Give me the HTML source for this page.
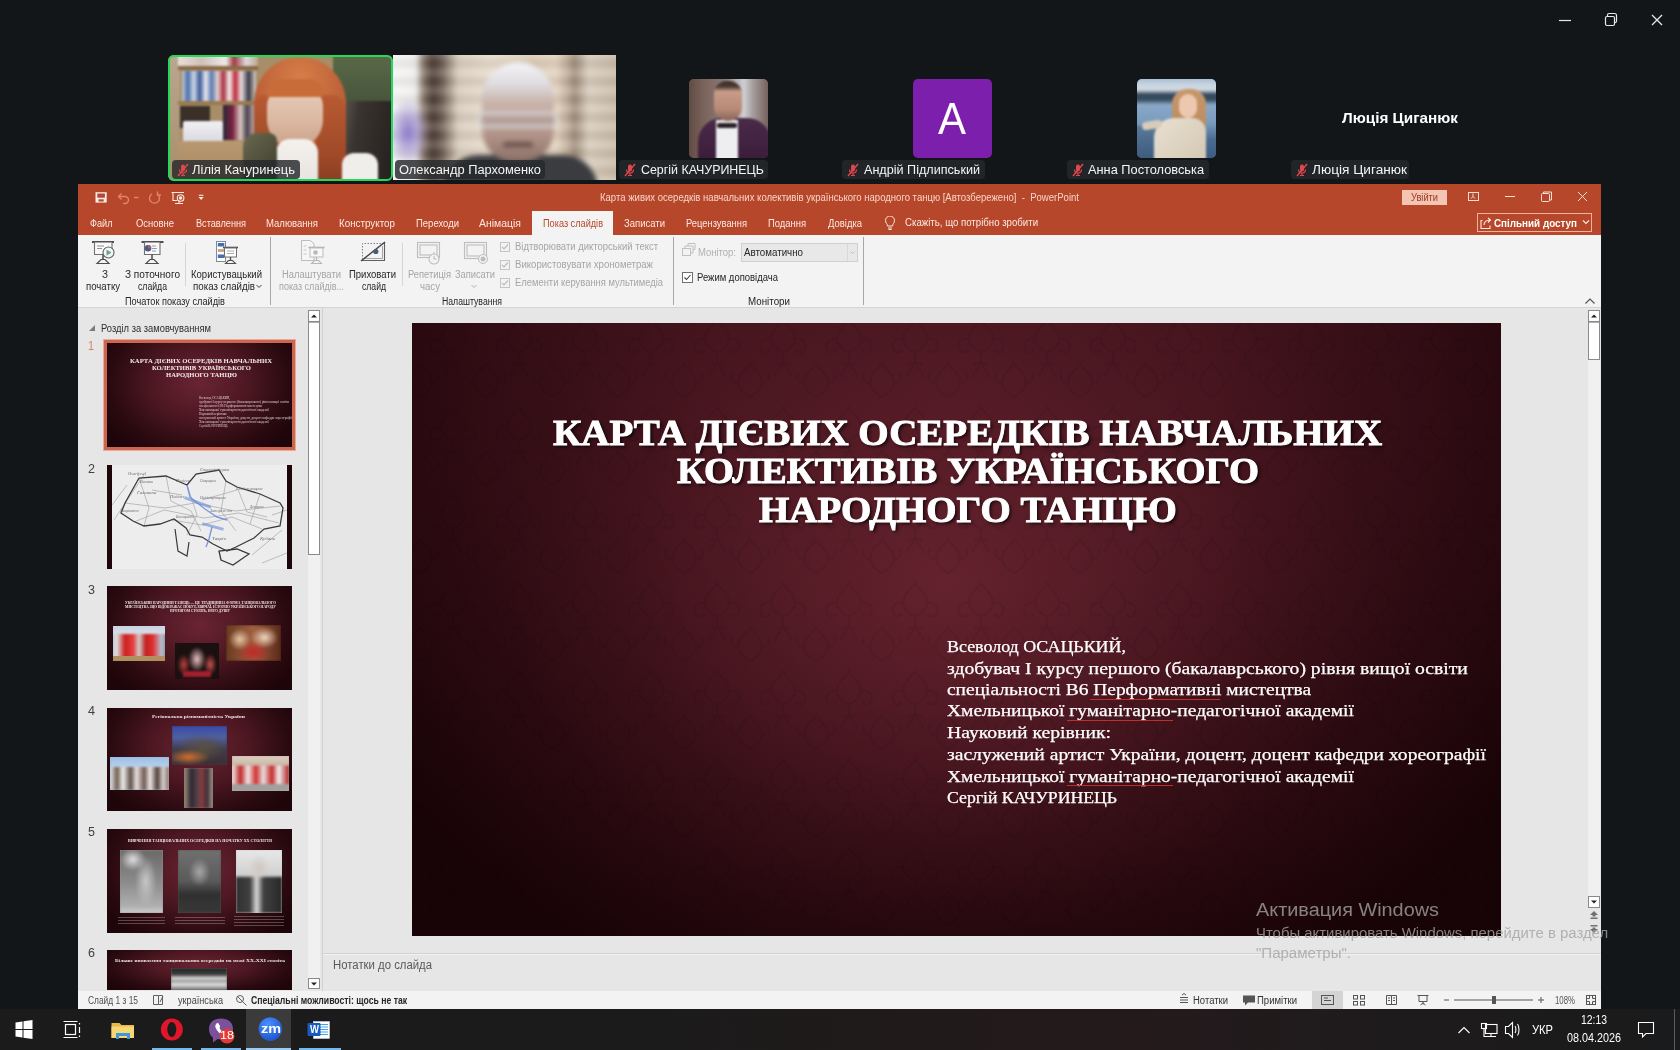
<!DOCTYPE html>
<html><head><meta charset="utf-8">
<style>
*{margin:0;padding:0;box-sizing:border-box}
html,body{width:1680px;height:1050px;overflow:hidden;background:#131619;font-family:"Liberation Sans",sans-serif}
.a{position:absolute}
.t{position:absolute;white-space:pre;line-height:1}
</style></head><body>
<div class="a" style="left:0;top:0;width:1680px;height:1008px;background:#131619"></div>
<svg class="a" style="left:1555px;top:10px" width="120" height="20" viewBox="0 0 120 20">
  <path d="M4 10.5h12" stroke="#e8e8e8" stroke-width="1.2"/>
  <rect x="50.5" y="6.5" width="9" height="9" rx="1.5" fill="none" stroke="#e8e8e8" stroke-width="1.2"/>
  <path d="M52.5 6.5v-1.5a1.5 1.5 0 0 1 1.5 -1.5h5.5a2 2 0 0 1 2 2v5.5a1.5 1.5 0 0 1 -1.5 1.5h-0.5" fill="none" stroke="#e8e8e8" stroke-width="1.2"/>
  <path d="M97 5l10 10M107 5l-10 10" stroke="#e8e8e8" stroke-width="1.3"/>
</svg>
<div class="a" style="left:168px;top:55px;width:225px;height:126px;border-radius:6px;overflow:hidden;background:#a88e68">
 <div class="a" style="left:0;top:0;width:225px;height:126px;filter:blur(1px)">
  <div class="a" style="left:0;top:0;width:12px;height:126px;background:linear-gradient(180deg,#b8a890,#a88e68)"></div>
  <div class="a" style="left:10px;top:0;width:80px;height:11px;background:linear-gradient(90deg,#e8e0d8,#d0c0b8 30%,#f0e8e8 60%,#a03a40 70%,#e0d8e0 85%,#b8a890)"></div>
  <div class="a" style="left:10px;top:11px;width:80px;height:4px;background:#8a6a48"></div>
  <div class="a" style="left:14px;top:16px;width:74px;height:30px;background:linear-gradient(90deg,#c8c8d8 0%,#4a70a8 8%,#d0d8e8 16%,#3a5a98 24%,#e8e8f0 32%,#5a7ab0 40%,#e0d0d0 48%,#b03040 56%,#f0f0f0 64%,#c02838 72%,#e8e0e0 80%,#3a3a48 90%,#d8d0c8 100%)"></div>
  <div class="a" style="left:10px;top:46px;width:80px;height:4px;background:#9a7a50"></div>
  <div class="a" style="left:12px;top:51px;width:30px;height:22px;background:#3a3028"></div>
  <div class="a" style="left:55px;top:50px;width:32px;height:35px;background:linear-gradient(90deg,#2a2a38,#7a2040 30%,#d8c8c0 55%,#4a4050 75%,#c8b8b0)"></div>
  <div class="a" style="left:15px;top:66px;width:40px;height:22px;background:linear-gradient(180deg,#f0f0f4,#d8d8e0);border-radius:2px"></div>
  <div class="a" style="left:10px;top:86px;width:80px;height:40px;background:linear-gradient(180deg,#b89870,#a88860)"></div>
  <div class="a" style="left:165px;top:0;width:60px;height:50px;background:linear-gradient(180deg,#5a6a48,#46543a)"></div>
  <div class="a" style="left:168px;top:46px;width:57px;height:80px;background:linear-gradient(100deg,#6a625a 0%,#3a3430 35%,#24201e 100%)"></div>
  <div class="a" style="left:86px;top:2px;width:92px;height:92px;border-radius:46px 46px 30px 30px;background:radial-gradient(ellipse at 50% 30%,#d8804a,#c0643a 60%,#a85230)"></div>
  <div class="a" style="left:148px;top:40px;width:30px;height:86px;border-radius:10px 14px 0 0;background:linear-gradient(180deg,#b85a32,#a04a28 70%,#8a3e22)"></div>
  <div class="a" style="left:86px;top:40px;width:20px;height:58px;border-radius:10px 4px 10px 10px;background:linear-gradient(180deg,#b85a32,#9a4a2a)"></div>
  <div class="a" style="left:99px;top:33px;width:56px;height:60px;border-radius:18px 18px 28px 28px;background:linear-gradient(180deg,#e6ccb8,#dcb8a0 55%,#c8a088)"></div>
  <div class="a" style="left:98px;top:24px;width:58px;height:18px;border-radius:28px 28px 6px 6px;background:#c86c3a"></div>
  <div class="a" style="left:108px;top:84px;width:42px;height:42px;border-radius:14px 14px 0 0;background:linear-gradient(180deg,#f4f2ee,#e8e4e0)"></div>
  <div class="a" style="left:75px;top:78px;width:34px;height:48px;border-radius:14px 8px 0 0;background:linear-gradient(135deg,#6a6a50,#3a3a2a)"></div>
  <div class="a" style="left:174px;top:98px;width:36px;height:28px;border-radius:12px 12px 0 0;background:#f0eeea"></div>
 </div>
 <div class="a" style="left:0;top:0;width:225px;height:126px;border:2px solid #23d959;border-radius:6px"></div>
</div>
<div class="a" style="left:393px;top:55px;width:223px;height:125px;overflow:hidden;background:#d8ccbc">
 <div class="a" style="left:-5px;top:-5px;width:233px;height:135px;filter:blur(2.5px)">
  <div class="a" style="left:0;top:0;width:233px;height:135px;background:linear-gradient(90deg,#f8f8f8 0%,#f0eeec 12%,#8a7a6c 15%,#4a3c34 19%,#6a5a50 23%,#d8ccbc 30%,#e8dccc 45%,#dccab4 62%,#e4d4c0 72%,#b8a490 78%,#9a8876 80%,#d8ccbc 86%,#c8b8a4 100%)"></div>
  <div class="a" style="left:0;top:0;width:233px;height:135px;background:repeating-linear-gradient(180deg,rgba(255,255,255,0.14) 0 9px,rgba(0,0,0,0.05) 9px 18px)"></div>
  <div class="a" style="left:0;top:50px;width:40px;height:65px;background:radial-gradient(ellipse at 50% 50%,#8a78c8,rgba(150,130,200,0) 75%)"></div>
  <div class="a" style="left:55px;top:105px;width:155px;height:35px;border-radius:50px 50px 0 0;background:#3a3c40"></div>
  <div class="a" style="left:94px;top:12px;width:72px;height:100px;border-radius:36px 36px 32px 32px;background:linear-gradient(180deg,#f4f4f8 0%,#e0dce0 22%,#c8b4ac 40%,#c0a498 60%,#a88a80 80%,#8a7068 100%)"></div>
  <div class="a" style="left:90px;top:62px;width:80px;height:16px;border-radius:5px;border:3px solid rgba(225,225,230,0.8);background:rgba(160,150,150,0.35)"></div>
  <div class="a" style="left:115px;top:92px;width:30px;height:5px;border-radius:3px;background:#6a5048"></div>
 </div>
</div>
<div class="a" style="left:689px;top:79px;width:79px;height:79px;border-radius:5px;overflow:hidden;background:#6a5a52">
 <div class="a" style="left:-3px;top:-3px;width:85px;height:85px;filter:blur(0.8px)">
  <div class="a" style="left:0;top:0;width:85px;height:85px;background:linear-gradient(90deg,#5a4640 0%,#7a625a 20%,#8a7a74 45%,#b8b4b8 60%,#d0d0d4 68%,#a8a0a0 78%,#6a5650 100%)"></div>
  <div class="a" style="left:12px;top:42px;width:73px;height:45px;border-radius:24px 24px 0 0;background:linear-gradient(180deg,#4a2a48,#3a1c3a)"></div>
  <div class="a" style="left:30px;top:44px;width:22px;height:41px;background:#eeeef0"></div>
  <div class="a" style="left:31px;top:47px;width:20px;height:5px;background:#2a2028;border-radius:2px"></div>
  <div class="a" style="left:28px;top:5px;width:28px;height:40px;border-radius:13px 13px 14px 14px;background:linear-gradient(180deg,#3a2e2a 0%,#4a3a34 14%,#c89c88 26%,#b88a78 70%,#8a6458 100%)"></div>
 </div>
</div>
<div class="a" style="left:913px;top:79px;width:79px;height:79px;border-radius:5px;background:#7d1fad"></div>
<div class="a" style="left:1137px;top:79px;width:79px;height:79px;border-radius:5px;overflow:hidden;background:#5a80a8">
 <div class="a" style="left:-3px;top:-3px;width:85px;height:85px;filter:blur(0.8px)">
  <div class="a" style="left:0;top:0;width:85px;height:85px;background:linear-gradient(180deg,#9ab4d0 0%,#c8d4e0 10%,#d0dae4 16%,#34485c 22%,#3a4e60 28%,#8aa8c8 34%,#7a9cc0 55%,#4a6a90 75%,#3a5a80 100%)"></div>
  <div class="a" style="left:0;top:50px;width:40px;height:35px;background:linear-gradient(180deg,#5a7898,#3a5a7c)"></div>
  <div class="a" style="left:38px;top:13px;width:34px;height:72px;border-radius:15px 15px 0 0;background:linear-gradient(180deg,#c8986c,#b08058)"></div>
  <div class="a" style="left:20px;top:42px;width:52px;height:43px;border-radius:20px 14px 0 0;background:linear-gradient(135deg,#e8e0d0,#d4c8b4)"></div>
  <div class="a" style="left:45px;top:18px;width:18px;height:24px;border-radius:9px;background:#ecc8b0"></div>
  <div class="a" style="left:8px;top:45px;width:20px;height:8px;border-radius:4px;background:#d8ccb8;transform:rotate(-10deg)"></div>
 </div>
</div>
<div class="t" style="left:938px;top:97.25px;font-size:44px;color:#fff;font-weight:normal;font-family:'Liberation Sans',sans-serif;transform:scaleX(0.954);transform-origin:0 0">A</div>
<div class="t" style="left:1342px;top:110.30px;font-size:15px;color:#fff;font-weight:bold;font-family:'Liberation Sans',sans-serif;transform:scaleX(1.019);transform-origin:0 0">Люція Циганюк</div>
<div class="a" style="left:172px;top:160px;width:128px;height:19px;border-radius:4px;background:rgba(38,40,44,0.82)"></div>
<svg class="a" style="left:176px;top:163px" width="14" height="14" viewBox="0 0 14 14"><rect x="5" y="1.5" width="4" height="7" rx="2" fill="#e0474d"/><path d="M3.5 6.5a3.5 3.5 0 0 0 7 0M7 10v2.5M5 12.5h4" stroke="#e0474d" stroke-width="1.2" fill="none"/><path d="M2 13L12 1" stroke="#e0474d" stroke-width="1.4"/></svg>
<div class="t" style="left:192px;top:163.00px;font-size:13px;color:#f4f4f4;font-weight:normal;font-family:'Liberation Sans',sans-serif;transform:scaleX(0.997);transform-origin:0 0">Лілія Качуринець</div>
<div class="a" style="left:395px;top:160px;width:150px;height:19px;border-radius:4px;background:rgba(38,40,44,0.82)"></div>
<div class="t" style="left:399px;top:163.00px;font-size:13px;color:#f4f4f4;font-weight:normal;font-family:'Liberation Sans',sans-serif;transform:scaleX(0.989);transform-origin:0 0">Олександр Пархоменко</div>
<div class="a" style="left:619px;top:160px;width:149px;height:19px;border-radius:4px;background:rgba(38,40,44,0.82)"></div>
<svg class="a" style="left:623px;top:163px" width="14" height="14" viewBox="0 0 14 14"><rect x="5" y="1.5" width="4" height="7" rx="2" fill="#e0474d"/><path d="M3.5 6.5a3.5 3.5 0 0 0 7 0M7 10v2.5M5 12.5h4" stroke="#e0474d" stroke-width="1.2" fill="none"/><path d="M2 13L12 1" stroke="#e0474d" stroke-width="1.4"/></svg>
<div class="t" style="left:641px;top:163.00px;font-size:13px;color:#f4f4f4;font-weight:normal;font-family:'Liberation Sans',sans-serif;transform:scaleX(0.955);transform-origin:0 0">Сергій КАЧУРИНЕЦЬ</div>
<div class="a" style="left:842px;top:160px;width:143px;height:19px;border-radius:4px;background:rgba(38,40,44,0.82)"></div>
<svg class="a" style="left:846px;top:163px" width="14" height="14" viewBox="0 0 14 14"><rect x="5" y="1.5" width="4" height="7" rx="2" fill="#e0474d"/><path d="M3.5 6.5a3.5 3.5 0 0 0 7 0M7 10v2.5M5 12.5h4" stroke="#e0474d" stroke-width="1.2" fill="none"/><path d="M2 13L12 1" stroke="#e0474d" stroke-width="1.4"/></svg>
<div class="t" style="left:864px;top:163.00px;font-size:13px;color:#f4f4f4;font-weight:normal;font-family:'Liberation Sans',sans-serif;transform:scaleX(0.970);transform-origin:0 0">Андрій Підлипський</div>
<div class="a" style="left:1067px;top:160px;width:142px;height:19px;border-radius:4px;background:rgba(38,40,44,0.82)"></div>
<svg class="a" style="left:1071px;top:163px" width="14" height="14" viewBox="0 0 14 14"><rect x="5" y="1.5" width="4" height="7" rx="2" fill="#e0474d"/><path d="M3.5 6.5a3.5 3.5 0 0 0 7 0M7 10v2.5M5 12.5h4" stroke="#e0474d" stroke-width="1.2" fill="none"/><path d="M2 13L12 1" stroke="#e0474d" stroke-width="1.4"/></svg>
<div class="t" style="left:1088px;top:163.00px;font-size:13px;color:#f4f4f4;font-weight:normal;font-family:'Liberation Sans',sans-serif;transform:scaleX(0.984);transform-origin:0 0">Анна Постоловська</div>
<div class="a" style="left:1291px;top:160px;width:118px;height:19px;border-radius:4px;background:rgba(38,40,44,0.82)"></div>
<svg class="a" style="left:1295px;top:163px" width="14" height="14" viewBox="0 0 14 14"><rect x="5" y="1.5" width="4" height="7" rx="2" fill="#e0474d"/><path d="M3.5 6.5a3.5 3.5 0 0 0 7 0M7 10v2.5M5 12.5h4" stroke="#e0474d" stroke-width="1.2" fill="none"/><path d="M2 13L12 1" stroke="#e0474d" stroke-width="1.4"/></svg>
<div class="t" style="left:1312px;top:163.00px;font-size:13px;color:#f4f4f4;font-weight:normal;font-family:'Liberation Sans',sans-serif;transform:scaleX(1.050);transform-origin:0 0">Люція Циганюк</div>
<div class="a" style="left:78px;top:184px;width:1523px;height:825px;background:#e6e6e6"></div>
<div class="a" style="left:78px;top:184px;width:1523px;height:51px;background:#b7472a"></div>
<div class="a" style="left:78px;top:235px;width:1523px;height:72px;background:#f3f3f3"></div>
<div class="a" style="left:78px;top:307px;width:1523px;height:1px;background:#d4d4d4"></div>

<svg class="a" style="left:90px;top:188px" width="120" height="20" viewBox="0 0 120 20">
 <rect x="5.5" y="4.2" width="11.2" height="10.4" fill="#fbeae4"/>
 <rect x="7.3" y="5.5" width="7.6" height="4.2" fill="#b04a35"/>
 <rect x="8.5" y="11.3" width="5.2" height="2.2" fill="#b04a35"/>
 <g fill="none" stroke="#e3826a" stroke-width="1.4">
  <path d="M29 8.5h6a3.5 3.5 0 0 1 0 7h-2"/><path d="M31.5 5.5l-3 3l3 3"/>
  <path d="M44 9.5h4.5"/>
  <path d="M62 5.8a5 5 0 1 0 5 0"/><path d="M67.5 3.5v3.5h3.5"/>
 </g>
 <g fill="none" stroke="#fbeae4" stroke-width="1.1">
  <path d="M81.5 4.5h12.5M83 4.5v8h4M85 15.5h8M89 12.5v3"/>
  <circle cx="90.6" cy="10" r="3.3"/><circle cx="90.6" cy="10" r="1.2" fill="#fbeae4"/>
 </g>
 <path d="M108.8 7.3h4.6" stroke="#fbeae4" stroke-width="1.1"/>
 <path d="M108.5 9l2.6 3l2.6-3z" fill="#fbeae4"/>
</svg>
<div class="t" style="left:600px;top:192.53px;font-size:10px;color:#f6d5c8;font-weight:normal;font-family:'Liberation Sans',sans-serif;transform:scaleX(0.954);transform-origin:0 0">Карта живих осередків навчальних колективів українського народного танцю [Автозбережено]  -  PowerPoint</div>
<div class="a" style="left:1402px;top:190px;width:45px;height:15px;background:#f5c5b4"></div>
<div class="t" style="left:1411px;top:193.03px;font-size:10px;color:#9b3a22;font-weight:normal;font-family:'Liberation Sans',sans-serif;transform:scaleX(0.929);transform-origin:0 0">Увійти</div>
<svg class="a" style="left:1460px;top:186px" width="140" height="20" viewBox="0 0 140 20">
 <g fill="none" stroke="#f8e0d6" stroke-width="1">
  <rect x="8.5" y="6.5" width="10" height="8"/><path d="M11 12.5l2 -2l2 2M13 10.5v-3"/>
  <path d="M45 10.5h10"/>
  <rect x="81.5" y="7.5" width="8" height="8" rx="1"/><path d="M83.5 7.5v-1.5h8v8h-2"/>
  <path d="M118 6l9 9M127 6l-9 9"/>
 </g>
</svg>
<div class="a" style="left:1477px;top:213px;width:115px;height:19px;border:1px solid #f0b29c"></div>
<svg class="a" style="left:1479px;top:215px" width="14" height="15" viewBox="0 0 14 15">
 <g fill="none" stroke="#fbe9e3" stroke-width="1.1"><path d="M3.5 5.5h-1.5v8h9v-3"/><path d="M5 10c0-3 2-5 6-5M9 3l2.5 2l-2.5 2.5"/></g></svg>
<div class="t" style="left:1494px;top:218.19px;font-size:11px;color:#fff;font-weight:bold;font-family:'Liberation Sans',sans-serif;transform:scaleX(0.895);transform-origin:0 0">Спільний доступ</div>
<svg class="a" style="left:1582px;top:219px" width="8" height="6" viewBox="0 0 8 6"><path d="M1 1.5l3 3l3-3" fill="none" stroke="#fbe9e3" stroke-width="1.1"/></svg>
<div class="a" style="left:532px;top:211px;width:81px;height:24px;background:#f3f3f3"></div>
<div class="t" style="left:89.5px;top:218.84px;font-size:10px;color:#fbe9e3;font-weight:normal;font-family:'Liberation Sans',sans-serif;transform:scaleX(0.915);transform-origin:0 0">Файл</div>
<div class="t" style="left:135.5px;top:218.84px;font-size:10px;color:#fbe9e3;font-weight:normal;font-family:'Liberation Sans',sans-serif;transform:scaleX(0.944);transform-origin:0 0">Основне</div>
<div class="t" style="left:195.5px;top:218.84px;font-size:10px;color:#fbe9e3;font-weight:normal;font-family:'Liberation Sans',sans-serif;transform:scaleX(0.915);transform-origin:0 0">Вставлення</div>
<div class="t" style="left:266px;top:218.84px;font-size:10px;color:#fbe9e3;font-weight:normal;font-family:'Liberation Sans',sans-serif;transform:scaleX(0.953);transform-origin:0 0">Малювання</div>
<div class="t" style="left:339px;top:218.84px;font-size:10px;color:#fbe9e3;font-weight:normal;font-family:'Liberation Sans',sans-serif;transform:scaleX(0.982);transform-origin:0 0">Конструктор</div>
<div class="t" style="left:415.5px;top:218.84px;font-size:10px;color:#fbe9e3;font-weight:normal;font-family:'Liberation Sans',sans-serif;transform:scaleX(0.949);transform-origin:0 0">Переходи</div>
<div class="t" style="left:479px;top:218.84px;font-size:10px;color:#fbe9e3;font-weight:normal;font-family:'Liberation Sans',sans-serif;transform:scaleX(1.044);transform-origin:0 0">Анімація</div>
<div class="t" style="left:542.5px;top:218.84px;font-size:10px;color:#b7472a;font-weight:normal;font-family:'Liberation Sans',sans-serif;transform:scaleX(0.916);transform-origin:0 0">Показ слайдів</div>
<div class="t" style="left:624px;top:218.84px;font-size:10px;color:#fbe9e3;font-weight:normal;font-family:'Liberation Sans',sans-serif;transform:scaleX(0.951);transform-origin:0 0">Записати</div>
<div class="t" style="left:686px;top:218.84px;font-size:10px;color:#fbe9e3;font-weight:normal;font-family:'Liberation Sans',sans-serif;transform:scaleX(0.936);transform-origin:0 0">Рецензування</div>
<div class="t" style="left:768px;top:218.84px;font-size:10px;color:#fbe9e3;font-weight:normal;font-family:'Liberation Sans',sans-serif;transform:scaleX(0.941);transform-origin:0 0">Подання</div>
<div class="t" style="left:827.5px;top:218.84px;font-size:10px;color:#fbe9e3;font-weight:normal;font-family:'Liberation Sans',sans-serif;transform:scaleX(0.945);transform-origin:0 0">Довідка</div>
<svg class="a" style="left:884px;top:216px" width="12" height="15" viewBox="0 0 12 15">
 <g fill="none" stroke="#fbe9e3" stroke-width="1"><path d="M3.5 10c0-2-2-3-2-5.5a4.5 4.5 0 0 1 9 0c0 2.5-2 3.5-2 5.5z"/><path d="M4 12h4M4.5 13.5h3"/></g></svg>
<div class="t" style="left:905px;top:218.23px;font-size:10px;color:#fbe9e3;font-weight:normal;font-family:'Liberation Sans',sans-serif;transform:scaleX(0.964);transform-origin:0 0">Скажіть, що потрібно зробити</div>
<svg class="a" style="left:78px;top:235px" width="800" height="72" viewBox="0 0 800 72">
 <!-- З початку icon -->
 <path d="M14 7h22" stroke="#505050" stroke-width="2"/>
 <path d="M16.5 7.5v12h17.5v-12" fill="#fafafa" stroke="#707070" stroke-width="1.1"/>
 <path d="M19 11h7M19 13.5h5" stroke="#909090" stroke-width="1"/>
 <path d="M25 19.5v5" stroke="#505050" stroke-width="1.6"/>
 <path d="M23 24.5h4l4 4h-12z" fill="none" stroke="#505050" stroke-width="1.2"/>
 <circle cx="30.5" cy="17.5" r="5.5" fill="#f3f8f5" stroke="#606060" stroke-width="1.1"/>
 <path d="M28.5 14.5v6.2l5-3.1z" fill="#6aa58a"/>
 <!-- З поточного icon -->
 <path d="M63.5 7h22" stroke="#505050" stroke-width="2"/>
 <path d="M66.5 7.5v12h15.5v-12" fill="#fafafa" stroke="#707070" stroke-width="1.1"/>
 <path d="M74 11h4M74 13.5h5M74 16h4" stroke="#8aa0b0" stroke-width="1"/>
 <circle cx="70" cy="13.2" r="3.3" fill="#505a80"/><path d="M70 9.9a3.3 3.3 0 0 1 3.3 3.3h-3.3z" fill="#b06060"/>
 <path d="M74 19.5v5" stroke="#505050" stroke-width="1.6"/>
 <path d="M72 24.5h4l4 4h-12z" fill="none" stroke="#505050" stroke-width="1.2"/>
 <!-- separator -->
 <path d="M107.5 8v43" stroke="#d6d6d6"/>
 <!-- Користувацький icon -->
 <rect x="138.5" y="6.5" width="9" height="20" fill="#fff" stroke="#7a8aa0" stroke-width="1"/>
 <rect x="139.8" y="8" width="6.5" height="3.5" fill="#4a6fa8"/><rect x="139.8" y="14" width="6.5" height="3" fill="#c8a888"/><rect x="139.8" y="19.5" width="6.5" height="3.5" fill="#4a6fa8"/>
 <path d="M145 12.5h15" stroke="#505050" stroke-width="1.6"/>
 <rect x="146.5" y="13" width="12" height="9" fill="#fff" stroke="#707070" stroke-width="1"/>
 <path d="M149 16h7M149 18.5h7" stroke="#a0a0a0" stroke-width="0.9"/>
 <path d="M152.5 22v3.5" stroke="#505050" stroke-width="1.4"/>
 <path d="M150.5 25.5h4l3 3h-10z" fill="none" stroke="#505050" stroke-width="1.1"/>
 <!-- group separator -->
 <path d="M192.5 2v68" stroke="#a8a8a8"/>
 <!-- Налаштувати icon (disabled) -->
 <path d="M223.5 5.5h9l3.5 3.5v16.5h-12.5z" fill="#f6f6f6" stroke="#bdbdbd" stroke-width="1"/>
 <path d="M225.5 11h3M225.5 15h3M225.5 19h3" stroke="#c8c8c8" stroke-width="1"/>
 <path d="M230.5 12.5h16" stroke="#b0b0b0" stroke-width="1.6"/>
 <rect x="232" y="13" width="13" height="9" fill="#f8f8f8" stroke="#bdbdbd" stroke-width="1"/>
 <circle cx="237.5" cy="17.5" r="2.3" fill="#b8b8b8"/>
 <path d="M238.5 22v3.5" stroke="#b8b8b8" stroke-width="1.3"/>
 <path d="M236.5 25.5h4l3 3h-10z" fill="none" stroke="#b8b8b8" stroke-width="1.1"/>
 <!-- Приховати icon -->
 <path d="M284.5 24.5v-16h21" fill="none" stroke="#808080" stroke-width="1" stroke-dasharray="1.5 1.5"/>
 <path d="M306.5 8v17.5h-23" fill="none" stroke="#606060" stroke-width="1.1"/>
 <path d="M304.5 11v12.5h-18" fill="none" stroke="#909090" stroke-width="0.8"/>
 <path d="M283 26l24-19" stroke="#404040" stroke-width="1.4"/>
 <circle cx="297.8" cy="16.5" r="2.6" fill="#4a5a78"/>
 <!-- separator -->
 <path d="M324.5 8v43" stroke="#d6d6d6"/>
 <!-- Репетиція icon -->
 <g fill="none" stroke="#bdbdbd" stroke-width="1.1">
  <rect x="339.5" y="7.5" width="22" height="15"/><rect x="342" y="10" width="17" height="10"/>
  <circle cx="356" cy="24" r="5" fill="#f3f3f3"/><path d="M356 21v3h2.5M355 18h2"/>
 </g>
 <!-- Записати icon -->
 <g fill="none" stroke="#bdbdbd" stroke-width="1.1">
  <rect x="386.5" y="7.5" width="22" height="16"/><rect x="389" y="10" width="17" height="11"/>
 </g>
 <circle cx="405" cy="24" r="4.5" fill="#f3f3f3" stroke="#bdbdbd"/><circle cx="405" cy="24" r="2.5" fill="#bdbdbd"/>
 <!-- checkboxes -->
 <g fill="#f3f3f3" stroke="#c4c4c4">
  <rect x="422.5" y="7.5" width="9" height="9"/><rect x="422.5" y="25.5" width="9" height="9"/><rect x="422.5" y="43.5" width="9" height="9"/>
 </g>
 <g fill="none" stroke="#bdbdbd" stroke-width="1.2">
  <path d="M424 12l2 2l4-4.5M424 30l2 2l4-4.5M424 48l2 2l4-4.5"/>
 </g>
 <!-- group separator -->
 <path d="M595.5 2v68" stroke="#a8a8a8"/>
 <!-- monitor icon -->
 <g fill="none" stroke="#c0c0c0" stroke-width="1">
  <rect x="604.5" y="13.5" width="8" height="7"/><path d="M607 13.5v-2.5h8v7h-2.5M610 11v-2.5h7v6h-2"/>
 </g>
 <!-- dropdown -->
 <rect x="663.5" y="8.5" width="116" height="18" fill="#e8e8e8" stroke="#d0d0d0"/>
 <path d="M769.5 9v17" stroke="#d8d8d8"/>
 <path d="M772.5 16.5l2 2l2-2" fill="none" stroke="#c0c0c0"/>
 <!-- Режим checkbox -->
 <rect x="604.5" y="37.5" width="10" height="10" fill="#fff" stroke="#707070"/>
 <path d="M606.5 42.5l2 2l4-4.5" fill="none" stroke="#404040" stroke-width="1.1"/>
 <!-- group separator -->
 <path d="M785.5 2v68" stroke="#a8a8a8"/>
</svg>
<div class="t" style="left:102px;top:269.54px;font-size:10px;color:#262626;font-weight:normal;font-family:'Liberation Sans',sans-serif;transform:scaleX(0.992);transform-origin:0 0">З</div>
<div class="t" style="left:86px;top:282.04px;font-size:10px;color:#262626;font-weight:normal;font-family:'Liberation Sans',sans-serif;transform:scaleX(0.961);transform-origin:0 0">початку</div>
<div class="t" style="left:124.5px;top:269.54px;font-size:10px;color:#262626;font-weight:normal;font-family:'Liberation Sans',sans-serif;transform:scaleX(1.006);transform-origin:0 0">З поточного</div>
<div class="t" style="left:138px;top:282.04px;font-size:10px;color:#262626;font-weight:normal;font-family:'Liberation Sans',sans-serif;transform:scaleX(0.869);transform-origin:0 0">слайда</div>
<div class="t" style="left:190.5px;top:269.54px;font-size:10px;color:#262626;font-weight:normal;font-family:'Liberation Sans',sans-serif;transform:scaleX(0.953);transform-origin:0 0">Користувацький</div>
<div class="t" style="left:192.5px;top:282.04px;font-size:10px;color:#262626;font-weight:normal;font-family:'Liberation Sans',sans-serif;transform:scaleX(0.973);transform-origin:0 0">показ слайдів</div>
<svg class="a" style="left:256px;top:284px" width="6" height="5" viewBox="0 0 6 5"><path d="M0.5 1l2.5 2.5l2.5-2.5" fill="none" stroke="#404040"/></svg>
<div class="t" style="left:124.5px;top:296.54px;font-size:10px;color:#262626;font-weight:normal;font-family:'Liberation Sans',sans-serif;transform:scaleX(0.918);transform-origin:0 0">Початок показу слайдів</div>
<div class="t" style="left:282px;top:269.54px;font-size:10px;color:#a6a6a6;font-weight:normal;font-family:'Liberation Sans',sans-serif;transform:scaleX(0.942);transform-origin:0 0">Налаштувати</div>
<div class="t" style="left:279px;top:282.04px;font-size:10px;color:#a6a6a6;font-weight:normal;font-family:'Liberation Sans',sans-serif;transform:scaleX(0.902);transform-origin:0 0">показ слайдів...</div>
<div class="t" style="left:349px;top:269.54px;font-size:10px;color:#262626;font-weight:normal;font-family:'Liberation Sans',sans-serif;transform:scaleX(0.949);transform-origin:0 0">Приховати</div>
<div class="t" style="left:361.5px;top:282.04px;font-size:10px;color:#262626;font-weight:normal;font-family:'Liberation Sans',sans-serif;transform:scaleX(0.862);transform-origin:0 0">слайд</div>
<div class="t" style="left:408px;top:269.54px;font-size:10px;color:#a6a6a6;font-weight:normal;font-family:'Liberation Sans',sans-serif;transform:scaleX(0.935);transform-origin:0 0">Репетиція</div>
<div class="t" style="left:420px;top:282.04px;font-size:10px;color:#a6a6a6;font-weight:normal;font-family:'Liberation Sans',sans-serif;transform:scaleX(0.962);transform-origin:0 0">часу</div>
<div class="t" style="left:454.5px;top:269.54px;font-size:10px;color:#a6a6a6;font-weight:normal;font-family:'Liberation Sans',sans-serif;transform:scaleX(0.928);transform-origin:0 0">Записати</div>
<svg class="a" style="left:471px;top:284px" width="6" height="5" viewBox="0 0 6 5"><path d="M0.5 1l2.5 2.5l2.5-2.5" fill="none" stroke="#b0b0b0"/></svg>
<div class="t" style="left:514.5px;top:242.03px;font-size:10px;color:#a6a6a6;font-weight:normal;font-family:'Liberation Sans',sans-serif;transform:scaleX(0.949);transform-origin:0 0">Відтворювати дикторський текст</div>
<div class="t" style="left:514.5px;top:260.04px;font-size:10px;color:#a6a6a6;font-weight:normal;font-family:'Liberation Sans',sans-serif;transform:scaleX(0.960);transform-origin:0 0">Використовувати хронометраж</div>
<div class="t" style="left:514.5px;top:278.04px;font-size:10px;color:#a6a6a6;font-weight:normal;font-family:'Liberation Sans',sans-serif;transform:scaleX(0.940);transform-origin:0 0">Елементи керування мультимедіа</div>
<div class="t" style="left:441.5px;top:296.54px;font-size:10px;color:#262626;font-weight:normal;font-family:'Liberation Sans',sans-serif;transform:scaleX(0.868);transform-origin:0 0">Налаштування</div>
<div class="t" style="left:697.5px;top:248.03px;font-size:10px;color:#b0b0b0;font-weight:normal;font-family:'Liberation Sans',sans-serif;transform:scaleX(0.947);transform-origin:0 0">Монітор:</div>
<div class="t" style="left:743.5px;top:248.03px;font-size:10px;color:#262626;font-weight:normal;font-family:'Liberation Sans',sans-serif;transform:scaleX(0.976);transform-origin:0 0">Автоматично</div>
<div class="t" style="left:696.5px;top:273.04px;font-size:10px;color:#262626;font-weight:normal;font-family:'Liberation Sans',sans-serif;transform:scaleX(0.948);transform-origin:0 0">Режим доповідача</div>
<div class="t" style="left:747.5px;top:296.54px;font-size:10px;color:#262626;font-weight:normal;font-family:'Liberation Sans',sans-serif;transform:scaleX(0.978);transform-origin:0 0">Монітори</div>
<svg class="a" style="left:1584px;top:297px" width="12" height="8" viewBox="0 0 12 8"><path d="M1.5 6.5l4.5-4.5l4.5 4.5" fill="none" stroke="#505050" stroke-width="1.1"/></svg>
<div class="a" style="left:322px;top:308px;width:1px;height:683px;background:#d0d0d0"></div>
<div class="a" style="left:308px;top:310px;width:12px;height:679px;background:#f0f0f0"></div>
<div class="a" style="left:308px;top:310px;width:12px;height:245px;background:#fff;border:1px solid #8a8a8a"></div>
<div class="a" style="left:308px;top:310px;width:12px;height:12px;background:#fff;border:1px solid #8a8a8a"></div>
<div class="a" style="left:309px;top:322px;width:10px;height:1px;background:#b0b0b0"></div>
<svg class="a" style="left:310px;top:313px" width="8" height="6" viewBox="0 0 8 6"><path d="M1 4.5h6l-3-3z" fill="#202020"/></svg>
<div class="a" style="left:308px;top:978px;width:12px;height:11px;background:#fff;border:1px solid #8a8a8a"></div>
<svg class="a" style="left:310px;top:981px" width="8" height="6" viewBox="0 0 8 6"><path d="M1 1.5h6l-3 3z" fill="#202020"/></svg>

<svg class="a" style="left:88px;top:324px" width="8" height="8" viewBox="0 0 8 8"><path d="M7 1v6h-6z" fill="#7a7a7a"/></svg>
<div class="t" style="left:100.5px;top:323.54px;font-size:10px;color:#303030;font-weight:normal;font-family:'Liberation Sans',sans-serif;transform:scaleX(0.937);transform-origin:0 0">Розділ за замовчуванням</div>
<div class="a" style="left:104px;top:340px;width:191px;height:110px;border:3px solid #cd6650;box-shadow:0 0 0 1px #e9ab98;background:#f0c8bc"></div>
<div class="a" style="left:107px;top:343px;width:185px;height:104px;background:radial-gradient(ellipse 60% 80% at 50% 38%,#6a2432 0%,#4c1721 45%,#2a0a10 80%,#1e0509 100%)"></div>
<div class="t" style="left:130px;top:357.98px;font-size:6px;color:#f4ecec;font-weight:bold;font-family:'Liberation Serif',serif;transform:scaleX(1.113);transform-origin:0 0">КАРТА ДІЄВИХ ОСЕРЕДКІВ НАВЧАЛЬНИХ</div>
<div class="t" style="left:152px;top:364.98px;font-size:6px;color:#f4ecec;font-weight:bold;font-family:'Liberation Serif',serif;transform:scaleX(1.095);transform-origin:0 0">КОЛЕКТИВІВ УКРАЇНСЬКОГО</div>
<div class="t" style="left:166px;top:371.98px;font-size:6px;color:#f4ecec;font-weight:bold;font-family:'Liberation Serif',serif;transform:scaleX(1.102);transform-origin:0 0">НАРОДНОГО ТАНЦЮ</div>
<div class="t" style="left:199px;top:395.65px;font-size:4px;color:rgba(240,225,228,0.85);font-weight:normal;font-family:'Liberation Serif',serif;transform:scaleX(0.777);transform-origin:0 0">Всеволод ОСАЦЬКИЙ,</div>
<div class="t" style="left:199px;top:399.65px;font-size:4px;color:rgba(240,225,228,0.85);font-weight:normal;font-family:'Liberation Serif',serif;transform:scaleX(0.849);transform-origin:0 0">здобувач І курсу першого (бакалаврського) рівня вищої освіти</div>
<div class="t" style="left:199px;top:403.65px;font-size:4px;color:rgba(240,225,228,0.85);font-weight:normal;font-family:'Liberation Serif',serif;transform:scaleX(0.840);transform-origin:0 0">спеціальності В6 Перформативні мистецтва</div>
<div class="t" style="left:199px;top:407.65px;font-size:4px;color:rgba(240,225,228,0.85);font-weight:normal;font-family:'Liberation Serif',serif;transform:scaleX(0.838);transform-origin:0 0">Хмельницької гуманітарно-педагогічної академії</div>
<div class="t" style="left:199px;top:411.65px;font-size:4px;color:rgba(240,225,228,0.85);font-weight:normal;font-family:'Liberation Serif',serif;transform:scaleX(0.840);transform-origin:0 0">Науковий керівник:</div>
<div class="t" style="left:199px;top:415.65px;font-size:4px;color:rgba(240,225,228,0.85);font-weight:normal;font-family:'Liberation Serif',serif;transform:scaleX(0.845);transform-origin:0 0">заслужений артист України, доцент, доцент кафедри хореографії</div>
<div class="t" style="left:199px;top:419.65px;font-size:4px;color:rgba(240,225,228,0.85);font-weight:normal;font-family:'Liberation Serif',serif;transform:scaleX(0.838);transform-origin:0 0">Хмельницької гуманітарно-педагогічної академії</div>
<div class="t" style="left:199px;top:423.65px;font-size:4px;color:rgba(240,225,228,0.85);font-weight:normal;font-family:'Liberation Serif',serif;transform:scaleX(0.755);transform-origin:0 0">Сергій КАЧУРИНЕЦЬ</div>
<div class="t" style="left:88px;top:339.84px;font-size:12px;color:#d5826c;font-weight:normal;font-family:'Liberation Sans',sans-serif;transform:scaleX(0.897);transform-origin:0 0">1</div>
<div class="a" style="left:107px;top:465px;width:185px;height:104px;background:#1e0509"></div>
<div class="a" style="left:112px;top:465px;width:175px;height:104px;background:#ededed;overflow:hidden">
<svg width="175" height="104" viewBox="0 0 175 104">
 <g fill="none" stroke="#9a9a9a" stroke-width="0.6">
  <path d="M27 13l10 30l-5 18M54 11l5 25l20 10l10 20M75 20l10 30l-10 20M114 16l-5 30l15 20M125 22l10 25l20 5M148 29l-10 30M13 38l40 5l30 -5l40 8l45 -5M22 57l30 -12l40 8l35 -5l40 10M60 55l30 5l30 -8l30 12M90 35l35 -10M40 25l30 5"/>
  <path d="M2 55l20 -30l10 -15M0 40l15 -20M140 90l30 -25M150 98l25 -10M160 50l15 -5"/>
 </g>

 <path d="M9 48l4 -10l14 -25l27 -2l21 9l9 -11l23 -4l7 11l11 6l23 7l20 9l3 5l-3 18l-16 3l-10 9l-18 9l-9 4l-14 -7l-11 -7l-12 -2l-4 -7l-12 -9l-14 5l-16 2l-11 -5z" fill="none" stroke="#3a3a3a" stroke-width="1.3"/>
 <path d="M107 86l2 9l12 5l16 -11l-12 -5z" fill="none" stroke="#3a3a3a" stroke-width="1.3"/>
 <path d="M63 64l3 22l9 5l2 -14" fill="none" stroke="#3a3a3a" stroke-width="1.2"/>
 <g fill="none" stroke="#6a8ad8" stroke-width="1.4" opacity="0.85">
  <path d="M75 20l3 12l15 12l12 8l10 3"/><path d="M100 62l-3 12l-3 8"/>
 </g>
 <g fill="#6a8ad8" opacity="0.6"><rect x="72" y="36" width="28" height="3" transform="rotate(20 86 37)"/><rect x="90" y="60" width="22" height="3" transform="rotate(15 101 61)"/></g>
</svg></div>
<div class="t" style="left:88px;top:462.84px;font-size:12px;color:#404040;font-weight:normal;font-family:'Liberation Sans',sans-serif;transform:scaleX(1.047);transform-origin:0 0">2</div>
<div class="t" style="left:128px;top:470.81px;font-size:5px;color:#6a6a6a;font-weight:normal;font-family:'Liberation Serif',serif;transform:scaleX(0.888);transform-origin:0 0;font-style:italic">Overijssel</div>
<div class="t" style="left:200px;top:466.81px;font-size:5px;color:#6a6a6a;font-weight:normal;font-family:'Liberation Serif',serif;transform:scaleX(0.888);transform-origin:0 0;font-style:italic">Стародубщина</div>
<div class="t" style="left:140px;top:478.81px;font-size:5px;color:#6a6a6a;font-weight:normal;font-family:'Liberation Serif',serif;transform:scaleX(0.880);transform-origin:0 0;font-style:italic">Волинь</div>
<div class="t" style="left:176px;top:477.81px;font-size:5px;color:#6a6a6a;font-weight:normal;font-family:'Liberation Serif',serif;transform:scaleX(0.840);transform-origin:0 0;font-style:italic">Полісся</div>
<div class="t" style="left:200px;top:477.81px;font-size:5px;color:#6a6a6a;font-weight:normal;font-family:'Liberation Serif',serif;transform:scaleX(0.690);transform-origin:0 0;font-style:italic">Сіверщина</div>
<div class="t" style="left:137px;top:489.81px;font-size:5px;color:#6a6a6a;font-weight:normal;font-family:'Liberation Serif',serif;transform:scaleX(0.985);transform-origin:0 0;font-style:italic">Галичина</div>
<div class="t" style="left:236px;top:485.81px;font-size:5px;color:#6a6a6a;font-weight:normal;font-family:'Liberation Serif',serif;transform:scaleX(0.787);transform-origin:0 0;font-style:italic">Слобожанщина</div>
<div class="t" style="left:170px;top:493.81px;font-size:5px;color:#6a6a6a;font-weight:normal;font-family:'Liberation Serif',serif;transform:scaleX(0.872);transform-origin:0 0;font-style:italic">Поділля</div>
<div class="t" style="left:200px;top:494.81px;font-size:5px;color:#6a6a6a;font-weight:normal;font-family:'Liberation Serif',serif;transform:scaleX(0.711);transform-origin:0 0;font-style:italic">Наддніпрянщина</div>
<div class="t" style="left:210px;top:507.81px;font-size:5px;color:#6a6a6a;font-weight:normal;font-family:'Liberation Serif',serif;transform:scaleX(0.872);transform-origin:0 0;font-style:italic">Запоріжжя</div>
<div class="t" style="left:250px;top:503.81px;font-size:5px;color:#6a6a6a;font-weight:normal;font-family:'Liberation Serif',serif;transform:scaleX(0.699);transform-origin:0 0;font-style:italic">Донщина</div>
<div class="t" style="left:176px;top:513.81px;font-size:5px;color:#6a6a6a;font-weight:normal;font-family:'Liberation Serif',serif;transform:scaleX(0.786);transform-origin:0 0;font-style:italic">Бессарабія</div>
<div class="t" style="left:212px;top:535.81px;font-size:5px;color:#6a6a6a;font-weight:normal;font-family:'Liberation Serif',serif;transform:scaleX(1.022);transform-origin:0 0;font-style:italic">Таврія</div>
<div class="t" style="left:260px;top:535.81px;font-size:5px;color:#6a6a6a;font-weight:normal;font-family:'Liberation Serif',serif;transform:scaleX(0.992);transform-origin:0 0;font-style:italic">Кубань</div>
<div class="t" style="left:120px;top:507.81px;font-size:5px;color:#6a6a6a;font-weight:normal;font-family:'Liberation Serif',serif;transform:scaleX(0.690);transform-origin:0 0;font-style:italic">Закарпаття</div>
<div class="a" style="left:107px;top:586px;width:185px;height:104px;background:radial-gradient(ellipse 60% 80% at 50% 38%,#6a2432 0%,#4c1721 45%,#2a0a10 80%,#1e0509 100%)"></div>
<div class="a" style="left:113px;top:626px;width:52px;height:35px;overflow:hidden;background:#a8b0c0"><div class="a" style="left:-2px;top:-2px;width:56px;height:39px;filter:blur(1px);background:linear-gradient(180deg,#c8d0e0 0%,#d8dce8 25%,rgba(0,0,0,0) 26%),linear-gradient(90deg,#b0b8c8,#e0e0e0 10%,#c82020 25%,#e84040 40%,#d0d0d0 50%,#c02020 62%,#e03030 75%,#b8c0d0 90%,#808890)"></div><div class="a" style="left:0;top:30px;width:52px;height:5px;background:#b09060"></div></div>
<div class="a" style="left:175px;top:643px;width:44px;height:36px;overflow:hidden;background:#1a1010"><div class="a" style="left:0;top:0;width:44px;height:36px;filter:blur(1px);background:radial-gradient(ellipse 20% 35% at 50% 45%,#f0c0c0,rgba(0,0,0,0) 100%),radial-gradient(ellipse 15% 30% at 20% 60%,#c04040,rgba(0,0,0,0) 100%),radial-gradient(ellipse 15% 30% at 80% 60%,#d05050,rgba(0,0,0,0) 100%)"></div><div class="a" style="left:8px;top:28px;width:28px;height:6px;background:#a02030;filter:blur(1px)"></div></div>
<div class="a" style="left:226px;top:625px;width:55px;height:36px;overflow:hidden;background:#3a1a10"><div class="a" style="left:0;top:0;width:55px;height:36px;filter:blur(1px);background:radial-gradient(ellipse 20% 30% at 25% 40%,#e8c8a8,rgba(0,0,0,0)),radial-gradient(ellipse 25% 30% at 70% 35%,#f0d8c0,rgba(0,0,0,0)),radial-gradient(ellipse 30% 35% at 50% 75%,#c02828,rgba(0,0,0,0)),linear-gradient(90deg,#6a3a20,#a06040,#5a2a18)"></div></div>

<div class="t" style="left:88px;top:583.84px;font-size:12px;color:#404040;font-weight:normal;font-family:'Liberation Sans',sans-serif;transform:scaleX(1.047);transform-origin:0 0">3</div>
<div class="t" style="left:125px;top:601.15px;font-size:4px;color:#f0e6e6;font-weight:bold;font-family:'Liberation Serif',serif;transform:scaleX(0.895);transform-origin:0 0">УКРАЇНСЬКИЙ НАРОДНИЙ ТАНЕЦЬ — ЦЕ ТРАДИЦІЙНА ФОРМА ТАНЦЮВАЛЬНОГО</div>
<div class="t" style="left:125px;top:605.15px;font-size:4px;color:#f0e6e6;font-weight:bold;font-family:'Liberation Serif',serif;transform:scaleX(0.898);transform-origin:0 0">МИСТЕЦТВА, ЩО ВІДОБРАЖАЄ ПОБУТ, ЗВИЧАЇ, ІСТОРІЮ УКРАЇНСЬКОГО НАРОДУ</div>
<div class="t" style="left:170px;top:609.15px;font-size:4px;color:#f0e6e6;font-weight:bold;font-family:'Liberation Serif',serif;transform:scaleX(0.851);transform-origin:0 0">ПРОТЯГОМ СТОЛІТЬ, ЙОГО ДУШУ</div>
<div class="a" style="left:107px;top:708px;width:185px;height:103px;background:radial-gradient(ellipse 60% 80% at 50% 38%,#6a2432 0%,#4c1721 45%,#2a0a10 80%,#1e0509 100%)"></div>
<div class="a" style="left:172px;top:726px;width:55px;height:39px;overflow:hidden;background:#3a3a60"><div class="a" style="left:0;top:0;width:55px;height:39px;filter:blur(1px);background:radial-gradient(ellipse 40% 20% at 30% 80%,#d07030,rgba(0,0,0,0)),radial-gradient(ellipse 45% 35% at 55% 55%,#5a5040,rgba(0,0,0,0)),linear-gradient(180deg,#3a4aa8,#5060a0 30%,#403c48 60%,#3a3030)"></div></div>
<div class="a" style="left:110px;top:757px;width:59px;height:33px;overflow:hidden;background:#9ab8d8"><div class="a" style="left:0;top:0;width:59px;height:33px;filter:blur(0.8px);background:linear-gradient(180deg,#9ac0e8 0%,#b8d0e8 30%,rgba(0,0,0,0) 31%),linear-gradient(90deg,#e8e8f0,#706050 12%,#f0f0f0 22%,#605048 35%,#e8e0e0 45%,#705a50 58%,#f0e8e8 68%,#504038 80%,#d8d0d0 90%,#8a7060)"></div></div>
<div class="a" style="left:184px;top:768px;width:29px;height:40px;overflow:hidden;background:#807060"><div class="a" style="left:0;top:0;width:29px;height:40px;filter:blur(0.8px);background:linear-gradient(90deg,#a09080,#302830 25%,#504048 45%,#8a3a40 60%,#403038 80%,#a09888)"></div></div>
<div class="a" style="left:232px;top:756px;width:57px;height:35px;overflow:hidden;background:#c0a8a0"><div class="a" style="left:0;top:0;width:57px;height:35px;filter:blur(0.8px);background:linear-gradient(180deg,#e0d0c0 0%,#c8b8a8 25%,rgba(0,0,0,0) 30%,rgba(0,0,0,0) 80%,#a0a0a0 81%),linear-gradient(90deg,#f0f0f0,#c02828 15%,#f0e8e8 28%,#d03030 42%,#e8e0e0 55%,#c82828 70%,#f0f0f0 82%,#b02020)"></div></div>

<div class="t" style="left:88px;top:704.84px;font-size:12px;color:#404040;font-weight:normal;font-family:'Liberation Sans',sans-serif;transform:scaleX(1.047);transform-origin:0 0">4</div>
<div class="t" style="left:152px;top:713.81px;font-size:5px;color:#f0e6e6;font-weight:bold;font-family:'Liberation Serif',serif;transform:scaleX(1.102);transform-origin:0 0">Регіональна різноманітність України</div>
<div class="a" style="left:107px;top:829px;width:185px;height:104px;background:radial-gradient(ellipse 60% 80% at 50% 38%,#6a2432 0%,#4c1721 45%,#2a0a10 80%,#1e0509 100%)"></div>
<div class="a" style="left:120px;top:850px;width:43px;height:63px;overflow:hidden;background:#909090"><div class="a" style="left:0;top:0;width:43px;height:63px;filter:blur(1px);background:radial-gradient(ellipse 30% 18% at 30% 15%,#e0e0e0,rgba(0,0,0,0)),radial-gradient(ellipse 25% 40% at 60% 50%,#c8c8c8,rgba(0,0,0,0)),linear-gradient(180deg,#6a6a6a,#8a8a8a 50%,#b0b0b0 90%,#d0d0d0)"></div></div>
<div class="a" style="left:178px;top:850px;width:43px;height:63px;overflow:hidden;background:#505050"><div class="a" style="left:0;top:0;width:43px;height:63px;filter:blur(1px);background:radial-gradient(ellipse 25% 22% at 50% 35%,#a8a8a8,rgba(0,0,0,0)),linear-gradient(180deg,#707070,#5a5a5a 50%,#303030 70%,#383838)"></div></div>
<div class="a" style="left:236px;top:850px;width:46px;height:63px;overflow:hidden;background:#c8c8c8"><div class="a" style="left:0;top:0;width:46px;height:63px;filter:blur(1px);background:radial-gradient(ellipse 22% 20% at 50% 28%,#d0c8c0,rgba(0,0,0,0)),linear-gradient(180deg,#e8e8e8 0%,#d0d0d0 40%,rgba(0,0,0,0) 45%),linear-gradient(90deg,#303030,#404040 30%,#d8d8d8 45%,#404040 60%,#282828)"></div></div>
<div class="a" style="left:118px;top:917px;width:47px;height:8px;background:repeating-linear-gradient(180deg,rgba(230,210,210,0.3) 0 1px,transparent 1px 3px)"></div>
<div class="a" style="left:175px;top:917px;width:50px;height:8px;background:repeating-linear-gradient(180deg,rgba(230,210,210,0.3) 0 1px,transparent 1px 3px)"></div>
<div class="a" style="left:234px;top:916px;width:50px;height:12px;background:repeating-linear-gradient(180deg,rgba(230,210,210,0.3) 0 1px,transparent 1px 3px)"></div>

<div class="t" style="left:88px;top:825.84px;font-size:12px;color:#404040;font-weight:normal;font-family:'Liberation Sans',sans-serif;transform:scaleX(1.047);transform-origin:0 0">5</div>
<div class="t" style="left:128px;top:837.81px;font-size:5px;color:#f0e6e6;font-weight:bold;font-family:'Liberation Serif',serif;transform:scaleX(0.813);transform-origin:0 0">ВИВЧЕННЯ ТАНЦЮВАЛЬНИХ ОСЕРЕДКІВ НА ПОЧАТКУ ХХ СТОЛІТТЯ</div>
<div class="a" style="left:107px;top:950px;width:185px;height:40px;overflow:hidden;background:radial-gradient(ellipse 60% 80% at 50% 38%,#6a2432 0%,#4c1721 45%,#2a0a10 80%,#1e0509 100%)"></div>
<div class="a" style="left:171px;top:968px;width:56px;height:22px;overflow:hidden;background:#606060"><div class="a" style="left:0;top:0;width:56px;height:22px;filter:blur(0.8px);background:linear-gradient(180deg,#202020 0%,#404040 30%,#d8d8d8 45%,#a0a0a0 60%,#e0e0e0 75%,#707070)"></div></div>

<div class="t" style="left:88px;top:946.84px;font-size:12px;color:#404040;font-weight:normal;font-family:'Liberation Sans',sans-serif;transform:scaleX(1.047);transform-origin:0 0">6</div>
<div class="t" style="left:115px;top:957.81px;font-size:5px;color:#f0e6e6;font-weight:bold;font-family:'Liberation Serif',serif;transform:scaleX(1.096);transform-origin:0 0">Більше виявлення танцювальних осередків на межі ХХ-ХХІ століть</div>
<div class="a" style="left:412px;top:323px;width:1089px;height:613px;overflow:hidden;background:radial-gradient(ellipse 40% 58% at 49% 42%,rgba(104,36,48,0.85) 0%,rgba(95,32,43,0.55) 40%,rgba(80,26,36,0.2) 75%,rgba(70,22,30,0) 100%),radial-gradient(ellipse 64% 105% at 50% 12%,#4e1822 0%,#46151e 35%,#330d15 65%,#22070c 88%,#180306 100%)"></div>
<svg class="a" style="left:412px;top:323px" width="1089" height="613" viewBox="0 0 1089 613">
 <defs><pattern id="dm" width="66" height="88" patternUnits="userSpaceOnUse" x="8" y="-10">
  <g fill="none" stroke="#000" stroke-width="2.2" opacity="0.07">
   <path d="M33 6c-4 8-12 10-12 20c0 6 5 10 12 14c7-4 12-8 12-14c0-10-8-12-12-20z"/>
   <path d="M21 26c-8-2-12 4-10 10c2 5 8 4 9 0M45 26c8-2 12 4 10 10c-2 5-8 4-9 0"/>
   <path d="M33 40v10M26 52c4-3 10-3 14 0M33 50c-3 6-8 8-8 14M33 50c3 6 8 8 8 14"/>
   <path d="M0 50c-4 8-12 10-12 20c0 6 5 10 12 14c7-4 12-8 12-14c0-10-8-12-12-20zM66 50c-4 8-12 10-12 20c0 6 5 10 12 14c7-4 12-8 12-14c0-10-8-12-12-20z"/>
   <path d="M12 70c6 0 9-6 6-10M54 70c-6 0-9-6-6-10"/>
  </g>
 </pattern></defs>
 <rect width="1089" height="613" fill="url(#dm)"/>
</svg>
<div class="t" style="left:553px;top:415.69px;font-size:35px;color:#fff;font-weight:bold;font-family:'Liberation Serif',serif;transform:scaleX(1.114);transform-origin:0 0;text-shadow:2px 2px 3px rgba(0,0,0,0.75);-webkit-text-stroke:0.9px #fff">КАРТА ДІЄВИХ ОСЕРЕДКІВ НАВЧАЛЬНИХ</div>
<div class="t" style="left:677px;top:454.19px;font-size:35px;color:#fff;font-weight:bold;font-family:'Liberation Serif',serif;transform:scaleX(1.104);transform-origin:0 0;text-shadow:2px 2px 3px rgba(0,0,0,0.75);-webkit-text-stroke:0.9px #fff">КОЛЕКТИВІВ УКРАЇНСЬКОГО</div>
<div class="t" style="left:759px;top:493.19px;font-size:35px;color:#fff;font-weight:bold;font-family:'Liberation Serif',serif;transform:scaleX(1.112);transform-origin:0 0;text-shadow:2px 2px 3px rgba(0,0,0,0.75);-webkit-text-stroke:0.9px #fff">НАРОДНОГО ТАНЦЮ</div>
<div class="t" style="left:947px;top:638.80px;font-size:16px;color:#fff;font-weight:normal;font-family:'Liberation Serif',serif;transform:scaleX(1.121);transform-origin:0 0;-webkit-text-stroke:0.25px #fff">Всеволод ОСАЦЬКИЙ,</div>
<div class="t" style="left:947px;top:660.90px;font-size:16px;color:#fff;font-weight:normal;font-family:'Liberation Serif',serif;transform:scaleX(1.228);transform-origin:0 0;-webkit-text-stroke:0.25px #fff">здобувач І курсу першого (бакалаврського) рівня вищої освіти</div>
<div class="t" style="left:947px;top:681.90px;font-size:16px;color:#fff;font-weight:normal;font-family:'Liberation Serif',serif;transform:scaleX(1.214);transform-origin:0 0;-webkit-text-stroke:0.25px #fff">спеціальності В6 Перформативні мистецтва</div>
<div class="t" style="left:947px;top:703.30px;font-size:16px;color:#fff;font-weight:normal;font-family:'Liberation Serif',serif;transform:scaleX(1.218);transform-origin:0 0;-webkit-text-stroke:0.25px #fff">Хмельницької гуманітарно-педагогічної академії</div>
<div class="t" style="left:947px;top:725.40px;font-size:16px;color:#fff;font-weight:normal;font-family:'Liberation Serif',serif;transform:scaleX(1.230);transform-origin:0 0;-webkit-text-stroke:0.25px #fff">Науковий керівник:</div>
<div class="t" style="left:947px;top:747.40px;font-size:16px;color:#fff;font-weight:normal;font-family:'Liberation Serif',serif;transform:scaleX(1.224);transform-origin:0 0;-webkit-text-stroke:0.25px #fff">заслужений артист України, доцент, доцент кафедри хореографії</div>
<div class="t" style="left:947px;top:768.80px;font-size:16px;color:#fff;font-weight:normal;font-family:'Liberation Serif',serif;transform:scaleX(1.218);transform-origin:0 0;-webkit-text-stroke:0.25px #fff">Хмельницької гуманітарно-педагогічної академії</div>
<div class="t" style="left:947px;top:789.80px;font-size:16px;color:#fff;font-weight:normal;font-family:'Liberation Serif',serif;transform:scaleX(1.107);transform-origin:0 0;-webkit-text-stroke:0.25px #fff">Сергій КАЧУРИНЕЦЬ</div>
<svg class="a" style="left:1090px;top:698px" width="130" height="3" viewBox="0 0 130 3"><path d="M0 2L1 1L2 2L3 1L4 2L5 1L6 2L7 1L8 2L9 1L10 2L11 1L12 2L13 1L14 2L15 1L16 2L17 1L18 2L19 1L20 2L21 1L22 2L23 1L24 2L25 1L26 2L27 1L28 2L29 1L30 2L31 1L32 2L33 1L34 2L35 1L36 2L37 1L38 2L39 1L40 2L41 1L42 2L43 1L44 2L45 1L46 2L47 1L48 2L49 1L50 2L51 1L52 2L53 1L54 2L55 1L56 2L57 1L58 2L59 1L60 2L61 1L62 2L63 1L64 2L65 1L66 2L67 1L68 2L69 1L70 2L71 1L72 2L73 1L74 2L75 1L76 2L77 1L78 2L79 1L80 2L81 1L82 2L83 1L84 2L85 1L86 2L87 1L88 2L89 1L90 2L91 1L92 2L93 1L94 2L95 1L96 2L97 1L98 2L99 1L100 2L101 1L102 2L103 1L104 2L105 1L106 2L107 1L108 2L109 1L110 2L111 1L112 2L113 1L114 2L115 1L116 2L117 1L118 2L119 1L120 2L121 1L122 2L123 1L124 2L125 1L126 2L127 1L128 2L129 1L130 2" fill="none" stroke="#d03030" stroke-width="0.9"/></svg>
<svg class="a" style="left:1067px;top:719px" width="106" height="3" viewBox="0 0 106 3"><path d="M0 2L1 1L2 2L3 1L4 2L5 1L6 2L7 1L8 2L9 1L10 2L11 1L12 2L13 1L14 2L15 1L16 2L17 1L18 2L19 1L20 2L21 1L22 2L23 1L24 2L25 1L26 2L27 1L28 2L29 1L30 2L31 1L32 2L33 1L34 2L35 1L36 2L37 1L38 2L39 1L40 2L41 1L42 2L43 1L44 2L45 1L46 2L47 1L48 2L49 1L50 2L51 1L52 2L53 1L54 2L55 1L56 2L57 1L58 2L59 1L60 2L61 1L62 2L63 1L64 2L65 1L66 2L67 1L68 2L69 1L70 2L71 1L72 2L73 1L74 2L75 1L76 2L77 1L78 2L79 1L80 2L81 1L82 2L83 1L84 2L85 1L86 2L87 1L88 2L89 1L90 2L91 1L92 2L93 1L94 2L95 1L96 2L97 1L98 2L99 1L100 2L101 1L102 2L103 1L104 2L105 1L106 2" fill="none" stroke="#d03030" stroke-width="0.9"/></svg>
<svg class="a" style="left:1067px;top:784px" width="106" height="3" viewBox="0 0 106 3"><path d="M0 2L1 1L2 2L3 1L4 2L5 1L6 2L7 1L8 2L9 1L10 2L11 1L12 2L13 1L14 2L15 1L16 2L17 1L18 2L19 1L20 2L21 1L22 2L23 1L24 2L25 1L26 2L27 1L28 2L29 1L30 2L31 1L32 2L33 1L34 2L35 1L36 2L37 1L38 2L39 1L40 2L41 1L42 2L43 1L44 2L45 1L46 2L47 1L48 2L49 1L50 2L51 1L52 2L53 1L54 2L55 1L56 2L57 1L58 2L59 1L60 2L61 1L62 2L63 1L64 2L65 1L66 2L67 1L68 2L69 1L70 2L71 1L72 2L73 1L74 2L75 1L76 2L77 1L78 2L79 1L80 2L81 1L82 2L83 1L84 2L85 1L86 2L87 1L88 2L89 1L90 2L91 1L92 2L93 1L94 2L95 1L96 2L97 1L98 2L99 1L100 2L101 1L102 2L103 1L104 2L105 1L106 2" fill="none" stroke="#d03030" stroke-width="0.9"/></svg>
<div class="a" style="left:1588px;top:310px;width:12px;height:598px;background:#f0f0f0"></div>
<div class="a" style="left:1588px;top:310px;width:12px;height:50px;background:#fff;border:1px solid #8a8a8a"></div>
<div class="a" style="left:1588px;top:310px;width:12px;height:12px;background:#fff;border:1px solid #8a8a8a"></div>
<div class="a" style="left:1589px;top:322px;width:10px;height:1px;background:#b0b0b0"></div>
<svg class="a" style="left:1590px;top:313px" width="8" height="6" viewBox="0 0 8 6"><path d="M1 4.5h6l-3-3z" fill="#202020"/></svg>
<div class="a" style="left:1588px;top:896px;width:12px;height:12px;background:#fff;border:1px solid #8a8a8a"></div>
<svg class="a" style="left:1590px;top:899px" width="8" height="6" viewBox="0 0 8 6"><path d="M1 1.5h6l-3 3z" fill="#202020"/></svg>
<svg class="a" style="left:1589px;top:910px" width="10" height="24" viewBox="0 0 10 24">
 <path d="M5 1l-4 4h2.5v1.5h3v-1.5h2.5z M1.5 7.5h7v1.5h-7z" fill="#707070"/>
 <path d="M1.5 15h7v1.5h-7z M5 23l-4-4h2.5v-1.5h3v1.5h2.5z" fill="#707070"/>
</svg>

<div class="a" style="left:323px;top:953px;width:1278px;height:1px;background:#d2d2d2"></div>
<div class="a" style="left:323px;top:954px;width:1278px;height:37px;background:#e6e6e6"></div>
<div class="a" style="left:323px;top:954px;width:1278px;height:1px;background:#f2f2f2"></div>
<div class="t" style="left:333px;top:959.34px;font-size:12px;color:#5a5a5a;font-weight:normal;font-family:'Liberation Sans',sans-serif;transform:scaleX(0.946);transform-origin:0 0">Нотатки до слайда</div>
<div class="a" style="left:78px;top:991px;width:1523px;height:18px;background:#f3f3f3"></div>
<div class="a" style="left:1312px;top:991px;width:31px;height:18px;background:#d4d4d4"></div>
<div class="t" style="left:87.5px;top:995.83px;font-size:10px;color:#505050;font-weight:normal;font-family:'Liberation Sans',sans-serif;transform:scaleX(0.838);transform-origin:0 0">Слайд 1 з 15</div>
<div class="t" style="left:178px;top:995.83px;font-size:10px;color:#444;font-weight:normal;font-family:'Liberation Sans',sans-serif;transform:scaleX(0.915);transform-origin:0 0">українська</div>
<div class="t" style="left:251px;top:995.83px;font-size:10px;color:#262626;font-weight:bold;font-family:'Liberation Sans',sans-serif;transform:scaleX(0.866);transform-origin:0 0">Спеціальні можливості: щось не так</div>
<div class="t" style="left:1192.5px;top:995.83px;font-size:10px;color:#333;font-weight:normal;font-family:'Liberation Sans',sans-serif;transform:scaleX(0.948);transform-origin:0 0">Нотатки</div>
<div class="t" style="left:1257px;top:995.83px;font-size:10px;color:#333;font-weight:normal;font-family:'Liberation Sans',sans-serif;transform:scaleX(0.953);transform-origin:0 0">Примітки</div>
<div class="t" style="left:1555px;top:995.83px;font-size:10px;color:#555;font-weight:normal;font-family:'Liberation Sans',sans-serif;transform:scaleX(0.782);transform-origin:0 0">108%</div>
<svg class="a" style="left:150px;top:993px" width="100" height="14" viewBox="0 0 100 14">
 <g fill="none" stroke="#606060" stroke-width="1">
  <path d="M3.5 2.5h5v9h-5zM8.5 2.5l4 0v9h-4"/><path d="M10 9l3-6"/>
  <circle cx="90" cy="6" r="3.5"/><path d="M92.5 8.5l4 4M87 3l6 6"/>
 </g>
</svg>
<svg class="a" style="left:1176px;top:993px" width="430" height="14" viewBox="0 0 430 14">
 <g fill="none" stroke="#555" stroke-width="1">
  <path d="M4 4.5h8M4 7h8M4 9.5h8M6 2l2-1.5l2 1.5"/>
 </g>
 <path d="M67 2.5h12v7h-7l-3 3v-3h-2z" fill="#555"/>
 <g fill="none" stroke="#555" stroke-width="1">
  <rect x="145.5" y="2.5" width="12" height="9"/><path d="M148 5h4M148 7.5h7"/><path d="M145.5 2.5v9" />
  <rect x="177.5" y="2.5" width="4" height="3.5"/><rect x="184.5" y="2.5" width="4" height="3.5"/><rect x="177.5" y="8.5" width="4" height="3.5"/><rect x="184.5" y="8.5" width="4" height="3.5"/>
  <path d="M210.5 2.5h10v9h-10zM215.5 2.5v9M212 5h2M212 7.5h2M217 5h2M217 7.5h2"/>
  <path d="M241.5 2.5h11M243 2.5v6h8v-6M247 8.5v3M244.5 12l2.5-2l2.5 2"/>
  <path d="M268 7h5M278 7h79M283 7h0M362 7h6M365 4v6"/>
  <rect x="410.5" y="2.5" width="9" height="9"/><path d="M410.5 5.5h3v-3M419.5 5.5h-3v-3M410.5 8.5h3v3M419.5 8.5h-3v3"/>
 </g>
 <rect x="316" y="3" width="4" height="8" fill="#555"/>
</svg>
<div class="t" style="left:1256px;top:901.01px;font-size:18px;color:rgba(162,162,162,0.8);font-weight:normal;font-family:'Liberation Sans',sans-serif;transform:scaleX(1.103);transform-origin:0 0">Активация Windows</div>
<div class="t" style="left:1256px;top:925.65px;font-size:14px;color:rgba(162,162,162,0.8);font-weight:normal;font-family:'Liberation Sans',sans-serif;transform:scaleX(1.065);transform-origin:0 0">Чтобы активировать Windows, перейдите в раздел</div>
<div class="t" style="left:1256px;top:945.65px;font-size:14px;color:rgba(162,162,162,0.8);font-weight:normal;font-family:'Liberation Sans',sans-serif;transform:scaleX(1.074);transform-origin:0 0">"Параметры".</div>
<div class="a" style="left:0;top:1009px;width:1680px;height:41px;background:linear-gradient(90deg,#1b1b1b 0%,#1c1b1b 40%,#221a1b 60%,#241a1c 68%,#1f1b1c 80%,#1a1b1c 100%)"></div>
<div class="a" style="left:246px;top:1009px;width:45px;height:41px;background:#3b3b3b"></div>
<div class="a" style="left:152px;top:1048px;width:40px;height:2px;background:#76b9ed"></div>
<div class="a" style="left:201px;top:1048px;width:40px;height:2px;background:#76b9ed"></div>
<div class="a" style="left:246px;top:1048px;width:45px;height:2px;background:#99cbf3"></div>
<div class="a" style="left:299px;top:1048px;width:42px;height:2px;background:#76b9ed"></div>
<div class="a" style="left:1674px;top:1009px;width:1px;height:41px;background:#5a5a5a"></div>
<svg class="a" style="left:0;top:1009px" width="350" height="41" viewBox="0 0 350 41">
 <!-- windows logo -->
 <path d="M15.5 13.5l7-1v7.5h-7zM23.5 12.3l9-1.3v9h-9zM15.5 21h7v7.5l-7-1zM23.5 21h9v9l-9-1.3z" fill="#fff"/>
 <!-- task view -->
 <g fill="none" stroke="#fff" stroke-width="1.2">
  <rect x="65.5" y="15.5" width="10" height="10"/><path d="M63.5 12.5h14M63.5 28.5h14"/>
  <path d="M79.5 14v1.5M79.5 18v6M79.5 26.5v1.5"/>
 </g>
 <!-- explorer -->
 <path d="M111.5 14h8l2 2h12.5v13h-22.5z" fill="#e8b84a"/>
 <path d="M111.5 17.5h22.5v11.5h-22.5z" fill="#f7d774"/>
 <path d="M116 24h14v6h-3v-3h-8v3h-3z" fill="#3a9ad9"/>
 <!-- opera -->
 <ellipse cx="171.8" cy="20.5" rx="11" ry="11" fill="#e0162b"/>
 <ellipse cx="171.8" cy="20.5" rx="4.5" ry="7.5" fill="#1c1b1b"/>
 <!-- viber -->
 <path d="M221 9.5c7 0 12 4 12 10.5s-5 10.5-12 10.5c-1.2 0-2.3-.1-3.4-.4l-4.6 3.4v-4.8c-2.6-1.9-4-5-4-8.7c0-6.5 5-10.5 12-10.5z" fill="#7b519d"/>
 <path d="M216.5 14.5c1-.8 2-.3 2.5.8l1 2c.3.8-.5 1.4-.5 1.8c.5 1.5 2 3 3.5 3.5c.5 0 1-.8 1.8-.5l2 1c1 .5 1.5 1.5.8 2.5c-1 1.3-2.5 1.8-4 1.2c-3.5-1.5-6.5-4.5-8-8c-.6-1.5-.2-3 .9-4.3z" fill="#fff"/>
 <circle cx="227" cy="27" r="7.5" fill="#e53935"/>
 <!-- zoom -->
 <circle cx="270.3" cy="20" r="11.5" fill="#2d6ff0"/>
 <circle cx="270.3" cy="20" r="11.5" fill="url(#zg)"/>
 <defs><radialGradient id="zg" cx="0.4" cy="0.3" r="0.8"><stop offset="0" stop-color="#4a90ff"/><stop offset="1" stop-color="#1a4fc8"/></radialGradient></defs>
 <!-- word -->
 <rect x="313.5" y="12.5" width="16" height="17" fill="#fff" stroke="#c8d8f0" stroke-width="0.6"/>
 <path d="M318 15.5h10M318 18h10M318 20.5h10M318 23h10M318 25.5h10" stroke="#41a5ee" stroke-width="1"/>
 <rect x="307.5" y="14" width="13" height="13" rx="1" fill="#185abd"/>
</svg>
<div class="t" style="left:219.5px;top:1031.04px;font-size:10px;color:#fff;font-weight:normal;font-family:'Liberation Sans',sans-serif;transform:scaleX(1.258);transform-origin:0 0">18</div>
<div class="t" style="left:260.5px;top:1022.00px;font-size:13px;color:#fff;font-weight:bold;font-family:'Liberation Sans',sans-serif;transform:scaleX(1.107);transform-origin:0 0">zm</div>
<div class="t" style="left:309.5px;top:1025.04px;font-size:10px;color:#fff;font-weight:bold;font-family:'Liberation Sans',sans-serif;transform:scaleX(0.952);transform-origin:0 0">W</div>
<svg class="a" style="left:1455px;top:1009px" width="225" height="41" viewBox="0 0 225 41">
 <g fill="none" stroke="#fff" stroke-width="1.1">
  <path d="M3.5 24l5.5-5.5l5.5 5.5"/>
  <rect x="30.5" y="15.5" width="11.5" height="9"/><path d="M36 24.5v3M31 27.5h10"/><rect x="26.5" y="14.5" width="5" height="5"/><path d="M29 19.5v8h2"/>
  <path d="M50.5 17.5h3l4-4v15l-4-4h-3z"/><path d="M60 17c1.2 1.5 1.2 5.5 0 7M62.5 15c2 2.5 2 9 0 11.5"/>
  <path d="M183.5 13.5h15v11h-7.5l-3.5 3.5v-3.5h-4z"/>
 </g>
</svg>
<div class="t" style="left:1531.5px;top:1023.84px;font-size:12px;color:#fff;font-weight:normal;font-family:'Liberation Sans',sans-serif;transform:scaleX(0.928);transform-origin:0 0">УКР</div>
<div class="t" style="left:1580.5px;top:1014.44px;font-size:12px;color:#fff;font-weight:normal;font-family:'Liberation Sans',sans-serif;transform:scaleX(0.866);transform-origin:0 0">12:13</div>
<div class="t" style="left:1566.7px;top:1032.44px;font-size:12px;color:#fff;font-weight:normal;font-family:'Liberation Sans',sans-serif;transform:scaleX(0.899);transform-origin:0 0">08.04.2026</div>
</body></html>
